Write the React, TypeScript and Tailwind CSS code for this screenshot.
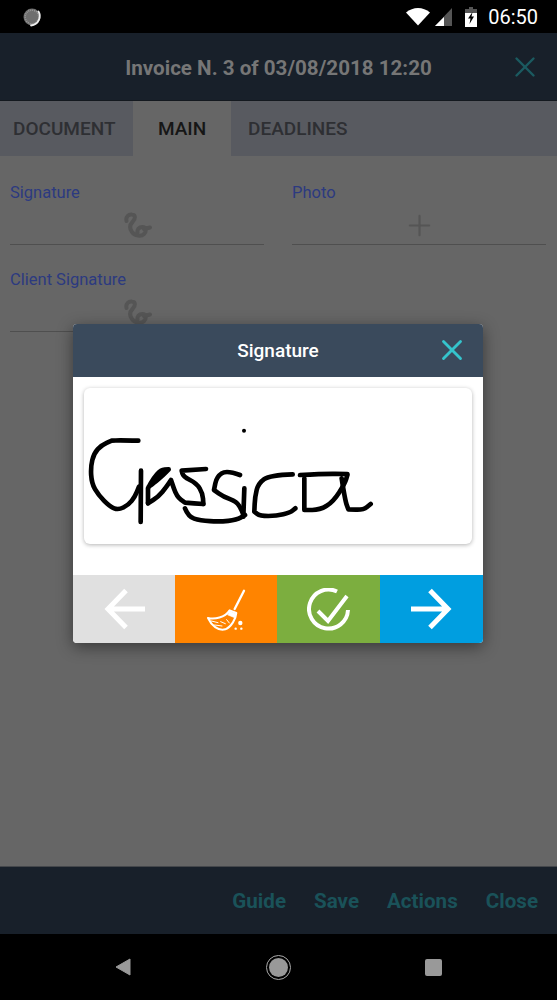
import React from "react";
import { Plus, X } from "lucide-react";

// turns sampled pen points into a stroke; a doubled point stays a corner
const smooth = (pts: number[][]) => {
  let d = `M${pts[0][0]} ${pts[0][1]}`;
  for (let i = 1; i < pts.length - 1; i++) {
    const mx = (pts[i][0] + pts[i + 1][0]) / 2;
    const my = (pts[i][1] + pts[i + 1][1]) / 2;
    d += `Q${pts[i][0]} ${pts[i][1]} ${mx} ${my}`;
  }
  const last = pts[pts.length - 1];
  return `${d}L${last[0]} ${last[1]}`;
};

const strokes = [
  [[205, 362], [150, 361], [125, 362], [125, 362], [95, 375], [72, 400], [62, 440], [65, 490], [85, 525], [120, 560], [145, 570], [175, 555], [195, 530], [207, 500]],
  [[213, 452], [212, 606]],
  [[234, 550], [234, 505], [234, 505], [250, 475], [272, 450], [296, 448], [296, 448], [280, 465], [250, 490], [236, 500]],
  [[234, 550], [234, 550], [265, 530], [290, 500], [303, 480], [303, 480], [320, 530], [345, 548], [345, 548], [400, 552], [400, 552]],
  [[408, 447], [335, 452], [335, 452], [340, 470], [380, 490], [398, 520], [400, 552]],
  [[345, 565], [355, 590], [390, 602], [450, 605], [500, 600], [525, 585]],
  [[510, 465], [470, 450], [440, 470], [432, 510], [432, 510], [460, 530], [500, 545], [515, 570], [520, 585]],
  [[523, 505], [520, 590]],
  [[668, 463], [600, 465], [565, 490], [555, 530], [553, 575], [553, 575], [570, 588], [620, 588], [660, 578], [676, 565]],
  [[690, 465], [760, 461], [832, 462]],
  [[703, 475], [703, 570], [703, 570], [750, 570], [790, 545], [825, 490], [832, 465]],
  [[815, 475], [825, 540], [835, 568], [835, 568], [880, 570], [902, 552]],
];

const Signature = () => (
  <svg viewBox="42 204 1164 468" className="block h-full w-full" fill="none" stroke="#000" strokeWidth="14" strokeLinecap="round" strokeLinejoin="round">
    {strokes.map((pts, i) => (
      <path key={i} d={smooth(pts)} />
    ))}
    <circle cx="522" cy="332" r="6" fill="#000" stroke="none" />
  </svg>
);

const Squiggle = () => (
  <svg width="29" height="29" viewBox="13 6 29 29" fill="none">
    <path
      d="M16.5 16C15.5 11.5 19 9 22 9.5C26 10 25.5 14 22.5 17C19.5 20 19.5 23.5 22 27C25 31 31 32 34 29C37 26 36 22 32.5 22C29 22 27 24.5 27.5 27.5M34 24L40 22.5"
      stroke="#555"
      strokeWidth="4"
      strokeLinecap="round"
    />
  </svg>
);

const LoadingDot = () => (
  <svg width="20" height="20" viewBox="0 0 20 20" fill="none">
    <circle cx="10" cy="10" r="8.5" fill="#6e6e6e" />
    <circle cx="10" cy="10" r="6.8" stroke="#9a9a9a" strokeWidth="1.6" strokeDasharray="1 1" />
    <path d="M16.5 4.5C19.5 9 17 17.5 9 18.5" stroke="#eee" strokeWidth="1.8" strokeLinecap="round" />
  </svg>
);

const StatusIcons = () => (
  <div className="flex items-center">
    <svg width="24" height="18" viewBox="0 0 24 18">
      <path d="M0 4.5C7 -1.5 17 -1.5 24 4.5L12 17.5Z" fill="#fff" />
    </svg>
    <svg width="17" height="18" viewBox="0 0 17 18" className="ml-[5px]">
      <path d="M17 0V18H0Z" fill="#555" />
      <path d="M9 9V18H0Z" fill="#fff" />
    </svg>
    <svg width="12" height="20" viewBox="0 0 12 20" className="ml-[13px]">
      <path d="M4 0H8V2H12V20H0V2H4Z" fill="#fff" />
      <path d="M4 0H8V2H12V6H0V2H4Z" fill="#555" />
      <path d="M7.5 5L3 11.5H5.5L4.5 17L9 9.5H6.5Z" fill="#000" />
    </svg>
  </div>
);

const ArrowLeftIcon = () => (
  <svg width="42" height="42" viewBox="0 0 42 42" fill="none" stroke="#fff" strokeWidth="5">
    <path d="M5 21H42M23 2.5L5 21L23 39.5" />
  </svg>
);

const ArrowRightIcon = () => (
  <svg width="42" height="42" viewBox="0 0 42 42" fill="none" stroke="#fff" strokeWidth="5">
    <path d="M37 21H0M19 2.5L37 21L19 39.5" />
  </svg>
);

const Broom = () => (
  <svg width="43.33" height="46.67" viewBox="28 17 130 140" fill="none" stroke="#fff" strokeLinecap="round">
    <path d="M148 31L120 86" strokeWidth="7" />
    <path d="M40 113C60 118 90 112 105 90L125 98C124 115 110 140 92 147C70 153 50 135 40 113Z" strokeWidth="6" strokeLinejoin="round" />
    <path d="M103 92L124 100L120 112L100 104Z" fill="#fff" strokeWidth="2" />
    <path d="M50 122L70 127M60 134L82 137M78 124L92 130M96 118L104 128" strokeWidth="3" />
    <circle cx="137" cy="128" r="6.5" fill="#fff" stroke="none" />
    <circle cx="123" cy="145" r="3.6" fill="#fff" stroke="none" />
    <circle cx="140" cy="145" r="3.6" fill="#fff" stroke="none" />
  </svg>
);

const CheckCircle = () => (
  <svg width="43" height="43" viewBox="0 0 43 43" fill="none" stroke="#fff" strokeWidth="4">
    <path d="M30 3.5A19.5 19.5 0 1 0 41 22" />
    <path d="M11 23L21 33L40 8" />
  </svg>
);

const Field = ({ label, children }: { label: string; children: React.ReactNode }) => (
  <div>
    <div className="text-[16.5px] leading-[20px] text-[#2c3a80]">{label}</div>
    <div className="flex h-[42px] items-center justify-center border-b border-[#4f4f4f] pt-[4px]">{children}</div>
  </div>
);

export default function App() {
  return (
    <div
      className="relative flex h-[1000px] w-[557px] flex-col overflow-hidden bg-[#666666]"
      style={{ fontFamily: "Roboto, sans-serif" }}
    >
      {/* Status bar */}
      <div className="flex h-[33px] items-center justify-between bg-black pl-[22px] pr-[19px]">
        <LoadingDot />
        <div className="flex items-center gap-[11px]">
          <StatusIcons />
          <span className="text-[20px] leading-none text-white">06:50</span>
        </div>
      </div>

      {/* Header */}
      <div className="relative flex h-[68px] items-center justify-center border-b border-[#14191f] bg-[#18202a] pt-[3px]">
        <span className="text-[20.6px] font-bold text-[#767676]">Invoice N. 3 of 03/08/2018 12:20</span>
        <X size={34} strokeWidth={1.7} className="absolute right-[15px] top-[17px] text-[#1b5a60]" />
      </div>

      {/* Tabs */}
      <div className="flex h-[55px] bg-[#585a60] pt-[2px] text-[19px] font-medium">
        <div className="flex w-[133px] items-center pl-[13px] text-[#2e2f33]">DOCUMENT</div>
        <div className="-mt-[2px] flex w-[98px] items-center justify-center bg-[#666666] pt-[2px] text-[#161616]">MAIN</div>
        <div className="flex items-center pl-[17px] text-[#2e2f33]">DEADLINES</div>
      </div>

      {/* Form */}
      <div className="flex-1 pl-[10px] pt-[27px]">
        <div className="grid grid-cols-[254px_254px] gap-x-[28px] gap-y-[25px]">
          <Field label="Signature"><Squiggle /></Field>
          <Field label="Photo"><Plus size={33} strokeWidth={1.6} className="text-[#555]" /></Field>
          <Field label="Client Signature"><Squiggle /></Field>
        </div>
      </div>

      {/* Footer */}
      <div className="flex h-[68px] items-center justify-end gap-[28px] border-t border-[#44474b] bg-[#18202a] pr-[19px] pt-[2px] text-[20.6px] font-bold text-[#1a5259]">
        <span>Guide</span>
        <span>Save</span>
        <span>Actions</span>
        <span>Close</span>
      </div>

      {/* Nav bar */}
      <div className="flex h-[66px] items-center justify-center bg-black">
        <svg width="16" height="18" viewBox="0 0 16 18">
          <path d="M15 1V17L1 9Z" fill="#999" stroke="#999" strokeLinejoin="round" />
        </svg>
        <div className="ml-[135px] flex h-[25px] w-[25px] items-center justify-center rounded-full border border-[#aaa]">
          <div className="h-[19px] w-[19px] rounded-full bg-[#999]" />
        </div>
        <div className="ml-[134px] h-[17px] w-[17px] rounded-[2px] bg-[#999]" />
      </div>

      {/* Signature dialog */}
      <div className="absolute left-[73px] top-[324px] w-[410px] overflow-hidden rounded-[4px] bg-white shadow-[0_4px_16px_rgba(0,0,0,0.45)]">
        <div className="relative flex h-[53px] items-center justify-center bg-[#3a4a5c] pt-[2px]">
          <span className="text-[19px] font-medium text-white">Signature</span>
          <X size={34} strokeWidth={2} className="absolute right-[14px] top-[9px] text-[#35c4cc]" />
        </div>
        <div className="px-[11px] pb-[31px] pt-[11px]">
          <div className="h-[156px] rounded-[6px] bg-white shadow-[0_1px_4px_rgba(0,0,0,0.3)]">
            <Signature />
          </div>
        </div>
        <div className="grid h-[68px] grid-cols-[102px_102px_103px_103px]">
          <div className="flex items-center justify-center bg-[#e0e0e0]"><ArrowLeftIcon /></div>
          <div className="flex items-center justify-center bg-[#ff8400]"><Broom /></div>
          <div className="flex items-center justify-center bg-[#7cae3f]"><CheckCircle /></div>
          <div className="flex items-center justify-center bg-[#009ee0]"><ArrowRightIcon /></div>
        </div>
      </div>
    </div>
  );
}
